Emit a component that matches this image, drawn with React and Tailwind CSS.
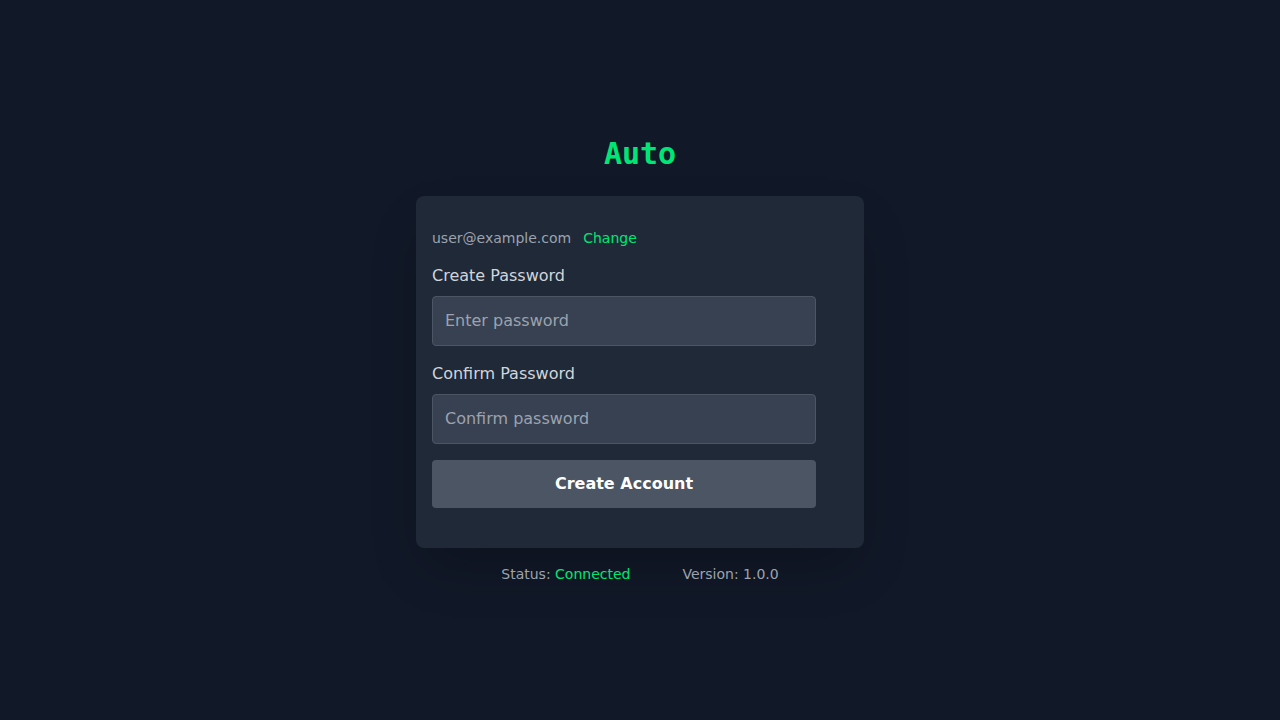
import React from 'react';

const App = () => {
  return (
    <div className="min-h-screen bg-[#111827] flex flex-col items-center justify-center font-['DejaVu_Sans',sans-serif]">
      <h1 className="text-3xl leading-9 font-bold text-[#00e676] font-['DejaVu_Sans_Mono',monospace] mb-6">
        Auto
      </h1>

      <div className="w-[448px] bg-[#1f2937] rounded-lg shadow-2xl px-4 pt-8 pb-10">
        <div className="flex items-center text-sm leading-5 mb-4">
          <span className="text-[#9ca3af]">user@example.com</span>
          <button className="ml-3 text-[#00e676]">Change</button>
        </div>

        <div className="w-96">
          <label className="block text-base leading-6 text-[#d1d5db] mb-2">Create Password</label>
          <input
            type="password"
            placeholder="Enter password"
            className="block w-full py-3 px-3 leading-6 bg-[#374151] border border-[#4b5563] rounded text-base text-white placeholder-[#9ca3af] outline-none mb-4"
          />

          <label className="block text-base leading-6 text-[#d1d5db] mb-2">Confirm Password</label>
          <input
            type="password"
            placeholder="Confirm password"
            className="block w-full py-3 px-3 leading-6 bg-[#374151] border border-[#4b5563] rounded text-base text-white placeholder-[#9ca3af] outline-none mb-4"
          />

          <button className="w-full h-12 bg-[#4b5563] rounded text-base font-bold text-white">
            Create Account
          </button>
        </div>
      </div>

      <div className="mt-4 flex items-center gap-[52px] text-sm leading-5 text-[#9ca3af]">
        <span>
          Status: <span className="text-[#00e676]">Connected</span>
        </span>
        <span>Version: 1.0.0</span>
      </div>
    </div>
  );
};

export default App;
